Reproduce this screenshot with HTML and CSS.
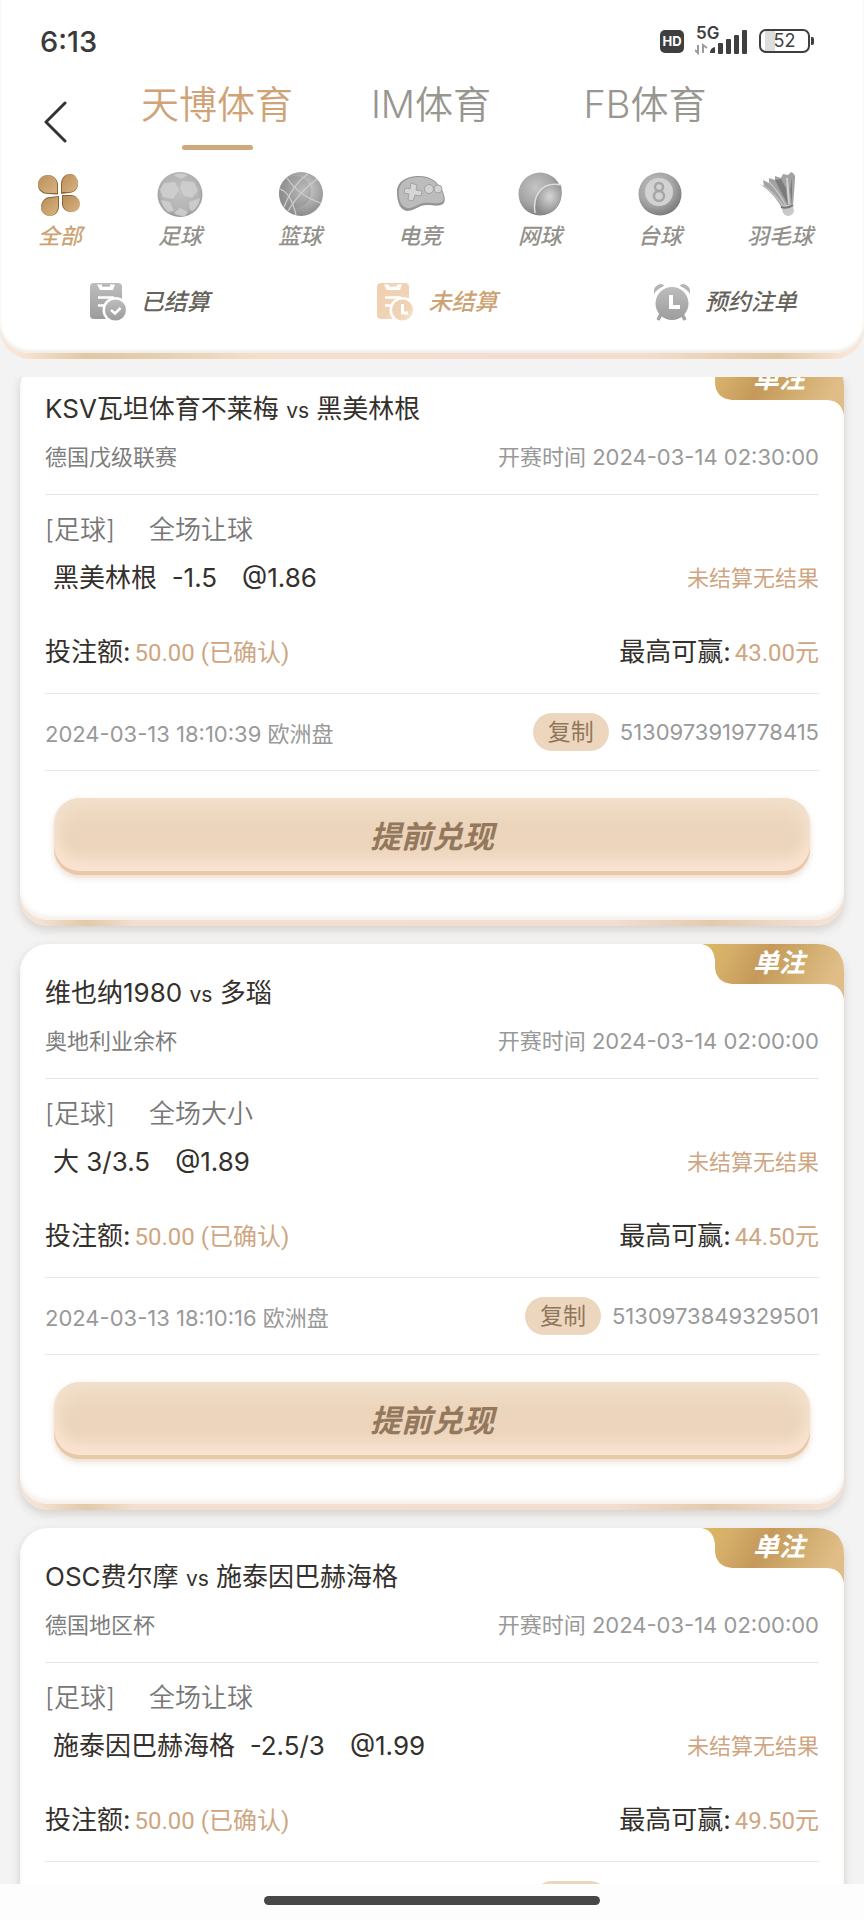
FILE: index.html
```html
<!DOCTYPE html>
<html lang="zh-CN">
<head>
    <meta charset="UTF-8">
    <meta name="viewport" content="width=device-width, initial-scale=1.0">
    <title>投注记录</title>
    <link rel="stylesheet" href="styles.css">
</head>
<body>
    <!-- shared gradients and the card ribbon -->
    <svg class="defs" width="0" height="0" aria-hidden="true">
        <defs>
            <linearGradient id="gold" x1="0" y1="0" x2="1" y2="1">
                <stop offset="0" stop-color="#b98f57"/>
                <stop offset="1" stop-color="#d9b384"/>
            </linearGradient>
            <radialGradient id="ball" cx="0.4" cy="0.35" r="0.7">
                <stop offset="0" stop-color="#c4c4c4"/>
                <stop offset="0.6" stop-color="#a3a3a3"/>
                <stop offset="1" stop-color="#777"/>
            </radialGradient>
            <radialGradient id="ballLight" cx="0.5" cy="0.45" r="0.6">
                <stop offset="0" stop-color="#c0c0c0"/>
                <stop offset="0.7" stop-color="#b4b4b4"/>
                <stop offset="1" stop-color="#8f8f8f"/>
            </radialGradient>
            <radialGradient id="shine" cx="0.55" cy="0.4" r="0.6">
                <stop offset="0" stop-color="#d6d6d6"/>
                <stop offset="1" stop-color="#8a8a8a"/>
            </radialGradient>
            <linearGradient id="grey" x1="0" y1="0" x2="0" y2="1">
                <stop offset="0" stop-color="#bdbdbd"/>
                <stop offset="1" stop-color="#9c9c9c"/>
            </linearGradient>
            <linearGradient id="peach" x1="0" y1="0" x2="1" y2="1">
                <stop offset="0" stop-color="#efcfae"/>
                <stop offset="0.6" stop-color="#f0d3b6"/>
                <stop offset="1" stop-color="#f8e9da"/>
            </linearGradient>
            <linearGradient id="ribbonFill" x1="0" y1="0" x2="1" y2="0.2">
                <stop offset="0" stop-color="#dcb95c"/>
                <stop offset="0.2" stop-color="#d6b06a"/>
                <stop offset="0.48" stop-color="#c5995a"/>
                <stop offset="0.72" stop-color="#cfab6c"/>
                <stop offset="1" stop-color="#e0bd87"/>
            </linearGradient>
            <symbol id="ribbon" viewBox="0 0 142 55">
                <path fill="url(#ribbonFill)" d="M0 0H116Q142 2 142 27V55Q139 40 124 40H30Q13 38 13 22Q14 3 0 0Z"/>
            </symbol>
        </defs>
    </svg>

    <div class="app">
        <div class="top">
            <header class="top-inner">
                <div class="status-bar">
                    <span class="clock">6:13</span>
                    <div class="status-icons">
                        <span class="hd">HD</span>
                        <span class="signal">
                            <span class="net">5G</span>
                            <svg width="54" height="28" viewBox="0 0 54 28" aria-hidden="true">
                                <path d="M3 18v8l-3-3M8 26v-8l4 3" fill="none" stroke="#9b9b9b" stroke-width="2"/>
                                <g fill="#3f3f3f">
                                    <path d="M15 26q0-5 5-6v6z"/>
                                    <rect x="23" y="16" width="5" height="11" rx="1"/>
                                    <rect x="31" y="12" width="5" height="15" rx="1"/>
                                    <rect x="39" y="8" width="5" height="19" rx="1"/>
                                    <rect x="47" y="3" width="5" height="24" rx="1"/>
                                </g>
                            </svg>
                        </span>
                        <span class="battery">52</span>
                    </div>
                </div>

                <nav class="venues">
                    <button class="back" type="button" aria-label="返回">
                        <svg width="24" height="42" viewBox="0 0 24 42"><path d="M21 2L2 21L21 40" fill="none" stroke="#333" stroke-width="3" stroke-linecap="round" stroke-linejoin="round"/></svg>
                    </button>
                    <a class="venue active" href="#tb">天博体育</a>
                    <a class="venue" href="#im">IM体育</a>
                    <a class="venue" href="#fb">FB体育</a>
                </nav>

                <nav class="sports">
                    <a class="sport active" href="#all">
                        <svg viewBox="0 0 50 50" aria-hidden="true">
                            <g fill="#8a6537">
                                <path d="M23 24.500V15C23 9 18 5 13 5S3 9 3 15S8 24 13 24Z"/>
                                <path d="M26 24V14C26 8 30 4 35 4S43 9 43 14S39 23 34 23Z"/>
                                <path d="M24 26V36C24 42 20 46 15 46S6 42 6 37S10 27 15 27Z"/>
                                <path d="M27 25H36C41 25 44 29 44 34S40 42 36 42S27 39 27 34Z"/>
                            </g>
                            <g fill="url(#gold)">
                                <path d="M22 23V15C22 9 18 5 13 5S3 9 3 14S8 23 13 23Z"/>
                                <path d="M27 22V14C27 8 31 4 35 4S43 8 43 13S39 22 35 22Z"/>
                                <path d="M23 27V36C23 42 19 46 15 46S6 42 6 38S10 28 15 28Z"/>
                                <path d="M28 26H37C41 26 45 29 45 34S41 42 37 42S28 39 28 34Z"/>
                            </g>
                        </svg>
                        全部
                    </a>
                    <a class="sport" href="#football">
                        <svg viewBox="0 0 50 50" aria-hidden="true">
                            <circle cx="25" cy="24.500" r="22.500" fill="url(#ballLight)"/>
                            <g fill="#d2d2d2" opacity="0.8">
                                <path d="M9 13L20 12L24 20L18 29L8 27L5 20Z"/>
                                <path d="M27 11L39 12L43 21L37 28L29 26L25 18Z"/>
                                <path d="M6 30L15 32L19 41L13 42Q7 37 6 30Z"/>
                                <path d="M19 43L25 38L33 42L30 46Q24 47 19 43Z"/>
                                <path d="M35 40L34 32L45 28Q44 36 38 41Z"/>
                                <path d="M18 5Q25 2 33 5L26 9Z"/>
                            </g>
                        </svg>
                        足球
                    </a>
                    <a class="sport" href="#basketball">
                        <svg viewBox="0 0 50 50" aria-hidden="true">
                            <circle cx="26" cy="24" r="22" fill="url(#shine)"/>
                            <circle cx="20" cy="22" r="16" fill="#858585" opacity="0.35"/>
                            <g fill="none" stroke="#cfcfcf" stroke-width="1.200">
                                <path d="M33 4Q18 14 9 37"/>
                                <path d="M42 9Q24 22 13 41"/>
                                <path d="M12 8Q24 26 46 33"/>
                                <path d="M5 19Q16 23 21 45"/>
                            </g>
                        </svg>
                        篮球
                    </a>
                    <a class="sport" href="#esports">
                        <svg viewBox="0 0 50 50" aria-hidden="true">
                            <path d="M2 22C2 11 12 6 24 6C36 6 42 12 46 18C50 24 51 32 48 34C42 38 34 33 26 36C21 38 17 41 12 41C5 40 2 32 2 22Z" fill="#959595"/>
                            <path d="M4 20C5 11 14 7 24 7C35 7 41 12 45 18C49 24 50 30 47 32C41 35 33 31 25 34C20 36 16 39 12 38C6 37 3 29 4 20Z" fill="#bcbcbc"/>
                            <path d="M16 13l6 2l-1 5l6 1l-1 5l-6-1l-2 6l-5-1l1-6l-5-1l1-5l5 1z" fill="#d6d6d6" stroke="#a2a2a2"/>
                            <circle cx="34" cy="19" r="4.500" fill="#d2d2d2" stroke="#a2a2a2"/>
                            <circle cx="43" cy="19" r="4" fill="#d2d2d2" stroke="#a2a2a2"/>
                        </svg>
                        电竞
                    </a>
                    <a class="sport" href="#tennis">
                        <svg viewBox="0 0 50 50" aria-hidden="true">
                            <circle cx="25" cy="24" r="21.500" fill="url(#ball)"/>
                            <path d="M46 15Q31 12 24 22Q18 30 20 43Q29 48 39 40Q49 31 46 15Z" fill="url(#shine)"/>
                            <path d="M46 15Q31 12 24 22Q18 30 20 43" fill="none" stroke="#dedede" stroke-width="1.500"/>
                        </svg>
                        网球
                    </a>
                    <a class="sport" href="#pool">
                        <svg viewBox="0 0 50 50" aria-hidden="true">
                            <circle cx="25" cy="24" r="21.500" fill="url(#ball)"/>
                            <circle cx="24" cy="22" r="14" fill="#d2d2d2"/>
                            <g fill="none" stroke="#a6a6a6" stroke-width="2.500">
                                <circle cx="24" cy="17" r="4"/>
                                <circle cx="24" cy="26" r="5"/>
                            </g>
                        </svg>
                        台球
                    </a>
                    <a class="sport" href="#badminton">
                        <svg viewBox="0 0 50 50" aria-hidden="true">
                            <path d="M5 14L9 16L8 10L14 13L14 8L20 10L20 6L26 8L28 4L33 5L36 2Q41 4 40 9L38 36L28 40Q20 24 5 14Z" fill="#a2a2a2"/>
                            <path d="M9 16Q20 24 29 37M14 12Q24 22 31 36" fill="none" stroke="#c4c4c4" stroke-width="1.500"/>
                            <path d="M32 8L34 34" fill="none" stroke="#d2d2d2" stroke-width="2"/>
                            <path d="M20 10Q25 20 33 35L31 18L26 9ZM37 8L37 34L35 20Z" fill="#7c7c7c"/>
                            <path d="M26 36L38 34L39 41A6 6 0 0 1 28 43Z" fill="#c9c9c9"/>
                            <path d="M26 37Q33 39 38 35" fill="none" stroke="#777" stroke-width="2"/>
                        </svg>
                        羽毛球
                    </a>
                </nav>

                <nav class="filters">
                    <a class="filter" href="#settled">
                        <svg viewBox="0 0 38 38" aria-hidden="true">
                            <rect x="1" y="0" width="32" height="36" rx="4" fill="url(#grey)"/>
                            <path d="M8 1.500H26L24 7H11Z" fill="#fff"/>
                            <path d="M13 2.500H21" stroke="#aaa" stroke-width="2"/>
                            <path d="M9 14.500H25M9 22.500H17" stroke="#fff" stroke-width="2.500"/>
                            <circle cx="26.500" cy="27" r="13" fill="#fff"/>
                            <circle cx="26.500" cy="27" r="10.500" fill="url(#grey)"/>
                            <path d="M22 27L26 30.500L31.500 25" fill="none" stroke="#fff" stroke-width="2.500"/>
                        </svg>
                        已结算
                    </a>
                    <a class="filter active" href="#open">
                        <svg viewBox="0 0 38 38" aria-hidden="true">
                            <rect x="1" y="0" width="32" height="36" rx="4" fill="url(#peach)"/>
                            <path d="M8 1.500H26L24 7H11Z" fill="#fff"/>
                            <path d="M13 2.500H21" stroke="#efcfae" stroke-width="2"/>
                            <path d="M9 14.500H25M9 22.500H17" stroke="#fff" stroke-width="2.500"/>
                            <circle cx="26.500" cy="27" r="13" fill="#fff"/>
                            <circle cx="26.500" cy="27" r="10.500" fill="url(#peach)"/>
                            <path d="M26.500 21V30H32" fill="none" stroke="#fff" stroke-width="3"/>
                        </svg>
                        未结算
                    </a>
                    <a class="filter" href="#reserved">
                        <svg viewBox="0 0 38 38" aria-hidden="true">
                            <path d="M8 31L5 37M29 31L32 37" stroke="#a3a3a3" stroke-width="3.500"/>
                            <path d="M1 11Q0 3 7 1Q11 1 11 3Q4 6 1 11ZM37 11Q38 3 31 1Q27 1 27 3Q34 6 37 11Z" fill="#b5b5b5"/>
                            <circle cx="19" cy="20.500" r="16.500" fill="url(#grey)"/>
                            <path d="M18 12V24H27" fill="none" stroke="#fff" stroke-width="4"/>
                        </svg>
                        预约注单
                    </a>
                </nav>
            </header>
        </div>

        <main class="bets">
            <div class="bets-scroll">
                <article class="card">
                    <div class="card-inner">
                        <div class="ribbon"><svg aria-hidden="true"><use href="#ribbon"/></svg><span>单注</span></div>
                        <h2 class="teams">KSV瓦坦体育不莱梅 <small>vs</small> 黑美林根</h2>
                        <div class="row league">
                            <span>德国戊级联赛</span>
                            <time class="muted">开赛时间 2024-03-14 02:30:00</time>
                        </div>
                        <div class="market"><span>[足球]</span><span>全场让球</span></div>
                        <div class="row pick">
                            <div class="choice"><span>黑美林根&nbsp; -1.5</span><span>@1.86</span></div>
                            <span class="result">未结算无结果</span>
                        </div>
                        <div class="row money">
                            <div>投注额:<span class="amount">50.00 (已确认)</span></div>
                            <div>最高可赢:<span class="amount">43.00元</span></div>
                        </div>
                        <div class="row meta">
                            <span>2024-03-13 18:10:39 欧洲盘</span>
                            <div class="order"><button class="copy" type="button">复制</button><span>5130973919778415</span></div>
                        </div>
                        <button class="cashout" type="button">提前兑现</button>
                    </div>
                </article>

                <article class="card">
                    <div class="card-inner">
                        <div class="ribbon"><svg aria-hidden="true"><use href="#ribbon"/></svg><span>单注</span></div>
                        <h2 class="teams">维也纳1980 <small>vs</small> 多瑙</h2>
                        <div class="row league">
                            <span>奥地利业余杯</span>
                            <time class="muted">开赛时间 2024-03-14 02:00:00</time>
                        </div>
                        <div class="market"><span>[足球]</span><span>全场大小</span></div>
                        <div class="row pick">
                            <div class="choice"><span>大 3/3.5</span><span>@1.89</span></div>
                            <span class="result">未结算无结果</span>
                        </div>
                        <div class="row money">
                            <div>投注额:<span class="amount">50.00 (已确认)</span></div>
                            <div>最高可赢:<span class="amount">44.50元</span></div>
                        </div>
                        <div class="row meta">
                            <span>2024-03-13 18:10:16 欧洲盘</span>
                            <div class="order"><button class="copy" type="button">复制</button><span>5130973849329501</span></div>
                        </div>
                        <button class="cashout" type="button">提前兑现</button>
                    </div>
                </article>

                <article class="card">
                    <div class="card-inner">
                        <div class="ribbon"><svg aria-hidden="true"><use href="#ribbon"/></svg><span>单注</span></div>
                        <h2 class="teams">OSC费尔摩 <small>vs</small> 施泰因巴赫海格</h2>
                        <div class="row league">
                            <span>德国地区杯</span>
                            <time class="muted">开赛时间 2024-03-14 02:00:00</time>
                        </div>
                        <div class="market"><span>[足球]</span><span>全场让球</span></div>
                        <div class="row pick">
                            <div class="choice"><span>施泰因巴赫海格&nbsp; -2.5/3</span><span>@1.99</span></div>
                            <span class="result">未结算无结果</span>
                        </div>
                        <div class="row money">
                            <div>投注额:<span class="amount">50.00 (已确认)</span></div>
                            <div>最高可赢:<span class="amount">49.50元</span></div>
                        </div>
                        <div class="row meta last">
                            <button class="copy" type="button" aria-label="复制"></button>
                        </div>
                    </div>
                </article>
            </div>
        </main>

        <div class="home-bar"><span></span></div>
    </div>
</body>
</html>
```
FILE: styles.css
```css
* {
    box-sizing: border-box;
}

body {
    margin: 0;
    background: #f3f3f3;
    color: #34302c;
    font-family: Inter, "Noto Sans CJK SC", sans-serif;
}

a {
    color: inherit;
    text-decoration: none;
}

button {
    border: none;
    padding: 0;
    background: none;
    font-family: inherit;
    cursor: pointer;
}

.defs {
    display: block;
    height: 0;
}

.app {
    display: flex;
    flex-direction: column;
    height: 100vh;
}

/* header */
.top {
    padding-bottom: 6px;
    border-radius: 0 0 30px 30px;
    background: linear-gradient(90deg, #f8e6d6 2%, #e2c7a2 10%, #e6cfae 18%, #f4dfc9 30%, #f4ddd0 60%, #f4ddcb 75%, #e2c7a2 90%, #f8e6d6 98%);
}

.top-inner {
    padding-bottom: 32px;
    border-radius: 0 0 30px 30px;
    background: #fff;
    box-shadow: inset 0 -3px 3px #f1efed;
}

.status-bar {
    display: flex;
    align-items: center;
    justify-content: space-between;
    height: 82px;
    padding: 0 50px 0 40px;
}

.clock {
    font-size: 29px;
    font-weight: 500;
    color: #3a3a3a;
}

.status-icons {
    display: flex;
    align-items: center;
    color: #3f3f3f;
}

.hd {
    width: 24px;
    border-radius: 5px;
    background: #3f3f3f;
    color: #fff;
    font-size: 13px;
    font-weight: 700;
    line-height: 23px;
    text-align: center;
}

.signal {
    position: relative;
    height: 28px;
    margin: 0 10px 0 11px;
}

.net {
    position: absolute;
    top: -2px;
    left: 1px;
    font-size: 17px;
    font-weight: 600;
    line-height: 16px;
}

.battery {
    position: relative;
    width: 51px;
    margin-right: 4px;
    border: 2px solid #3f3f3f;
    border-radius: 7px;
    background: linear-gradient(90deg, #fff 4px, #ddd 4px, #ddd 14px, #fff 14px);
    font-size: 18px;
    line-height: 20px;
    text-align: center;
}

.battery::after {
    content: "";
    position: absolute;
    top: 6px;
    right: -6px;
    width: 3px;
    height: 8px;
    border-radius: 0 2px 2px 0;
    background: #3f3f3f;
}

.venues {
    display: grid;
    grid-template-columns: 110px repeat(3, 1fr) 112px;
    height: 70px;
}

.back {
    display: flex;
    align-items: center;
    padding: 10px 0 0 44px;
}

.venue {
    display: flex;
    flex-direction: column;
    align-items: center;
    color: #989690;
    font-size: 38px;
    font-weight: 350;
    line-height: 44px;
    white-space: nowrap;
}

.venue.active {
    color: #cfa377;
}

.venue.active::after {
    content: "";
    width: 71px;
    height: 5px;
    margin-top: 19px;
    border-radius: 3px;
    background: #cda97c;
}

.sports {
    display: grid;
    grid-template-columns: repeat(7, 1fr);
    padding: 18px 24px 0 0;
}

.sport {
    display: flex;
    flex-direction: column;
    align-items: center;
    color: #94918c;
    font-size: 22px;
    font-weight: 500;
    font-style: italic;
    line-height: 32px;
}

.sport svg {
    width: 50px;
    height: 50px;
}

.sport.active,
.filter.active {
    color: #cda374;
}

.filters {
    display: grid;
    grid-template-columns: repeat(3, 1fr);
    column-gap: 9px;
    margin-top: 31px;
    padding-left: 10px;
}

.filter {
    display: flex;
    align-items: center;
    justify-content: center;
    gap: 14px;
    color: #66625c;
    font-size: 23px;
    font-weight: 500;
    font-style: italic;
    line-height: 38px;
}

.filter svg {
    width: 38px;
    height: 38px;
}

/* bet list */
.bets {
    flex: 1;
    min-height: 0;
    margin-top: 18px;
    padding: 0 20px;
    overflow: hidden;
}

/* the list is scrolled a little under the header */
.bets-scroll {
    margin-top: -17px;
}

.card {
    margin-bottom: 18px;
    padding-bottom: 6px;
    border-radius: 28px;
    background: linear-gradient(90deg, #f5e3d6 2%, #e2c9a8 8%, #f3dfd0 14%, #f3ddd0 72%, #e3caae 84%, #f3e1d4 97%);
    box-shadow: 0 4px 10px rgba(90, 70, 50, 0.2);
}

.card-inner {
    position: relative;
    padding: 31px 25px 45px;
    border-radius: 28px;
    background: #fff;
    box-shadow: inset 0 -4px 4px #f4f0ec;
}

.ribbon {
    position: absolute;
    top: 0;
    right: 0;
    width: 142px;
    color: #fff;
    font-size: 26px;
    font-weight: 700;
    font-style: italic;
    line-height: 38px;
    text-align: center;
}

.ribbon svg {
    position: absolute;
    top: 0;
    left: 0;
    width: 142px;
    height: 55px;
}

.ribbon span {
    position: relative;
    padding-left: 12px;
}

.row {
    display: flex;
    align-items: center;
    justify-content: space-between;
}

.teams {
    margin: 0;
    font-size: 26px;
    font-weight: 400;
    line-height: 36px;
}

.teams small {
    font-size: 21px;
}

.league {
    margin-top: 13px;
    padding-bottom: 22px;
    border-bottom: 1px solid #e8e8e8;
    color: #7d7d7d;
    font-size: 22px;
    line-height: 30px;
}

.muted {
    color: #999;
}

.market {
    display: flex;
    gap: 34px;
    margin-top: 17px;
    color: #777;
    font-size: 26px;
    font-weight: 350;
    line-height: 36px;
}

.pick {
    margin-top: 12px;
    padding-left: 8px;
    font-size: 26px;
    line-height: 36px;
}

.choice {
    display: flex;
    gap: 25px;
}

.result {
    color: #cfa682;
    font-size: 22px;
}

.money {
    margin-top: 38px;
    padding-bottom: 22px;
    border-bottom: 1px solid #e8e8e8;
    font-size: 26px;
    line-height: 36px;
}

.amount {
    margin-left: 4px;
    color: #cfa682;
    font-family: Roboto, "Noto Sans CJK SC", sans-serif;
    font-size: 24px;
}

.meta {
    height: 77px;
    border-bottom: 1px solid #e8e8e8;
    color: #999;
    font-size: 22px;
}

.meta.last {
    justify-content: flex-end;
    padding-right: 210px;
}

.order {
    display: flex;
    align-items: center;
    gap: 11px;
}

.copy {
    width: 76px;
    height: 38px;
    border-radius: 19px;
    background: #edd6be;
    color: #8f765b;
    font-size: 23px;
    line-height: 36px;
}

.cashout {
    display: block;
    width: calc(100% - 18px);
    height: 77px;
    margin: 27px 9px 0;
    padding-bottom: 5px;
    border-radius: 26px;
    background: #ecd5bc;
    box-shadow: inset 0 -4px 0 #e8c8a8, inset 0 -16px 14px #fae4d2, inset 0 10px 20px #f3e2ce, 0 3px 6px rgba(190, 140, 100, 0.3);
    color: #94785c;
    font-size: 31px;
    font-weight: 700;
    font-style: italic;
}

.home-bar {
    display: flex;
    justify-content: center;
    padding: 12px 0 15px;
    background: #fdfdfd;
}

.home-bar span {
    width: 39%;
    height: 9px;
    border-radius: 5px;
    background: #474747;
}
```
